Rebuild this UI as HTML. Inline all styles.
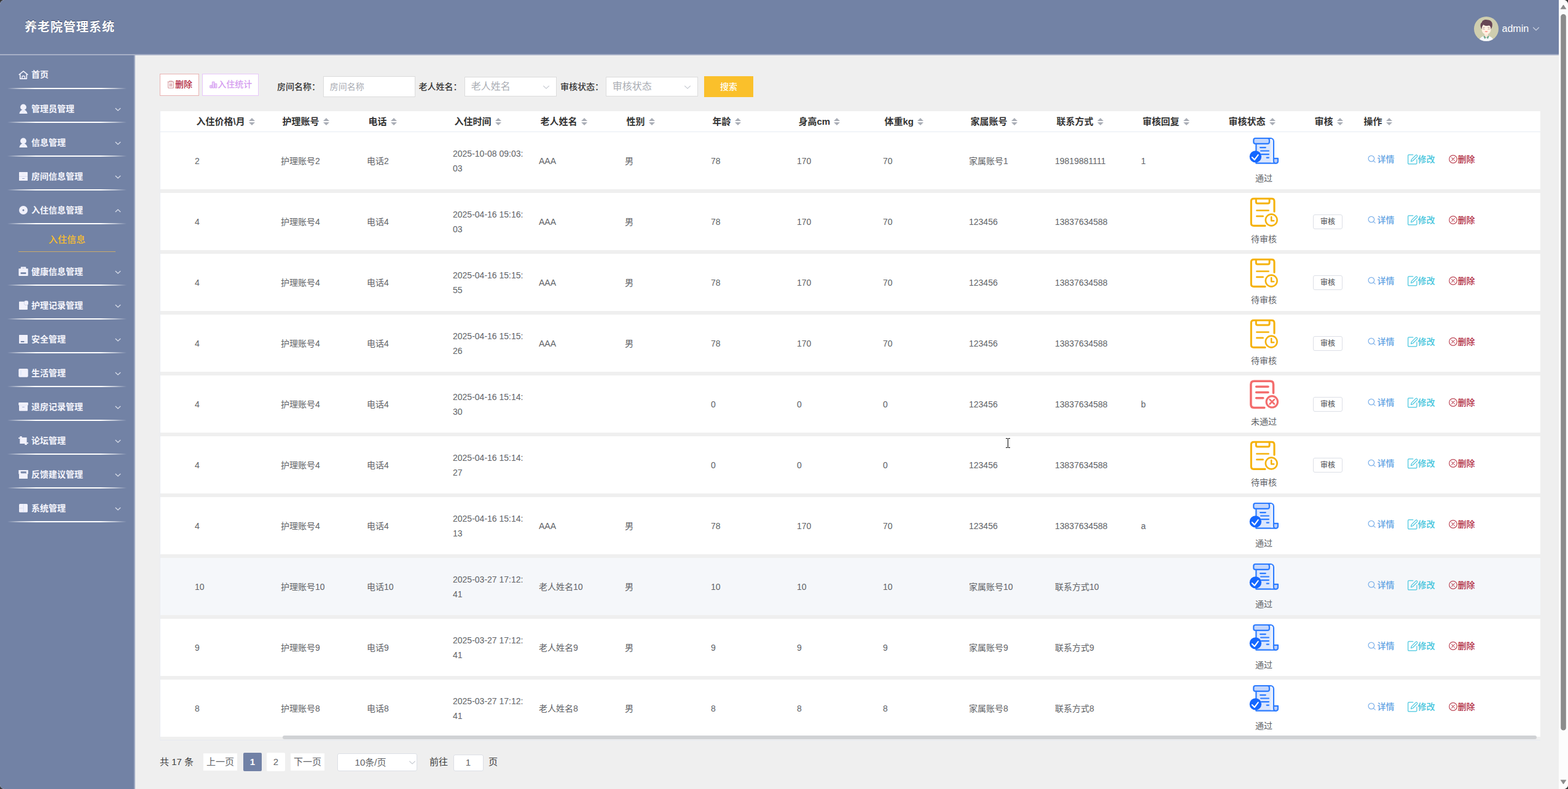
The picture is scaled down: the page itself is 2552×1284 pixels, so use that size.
<!DOCTYPE html><html lang="zh-CN"><head><meta charset="utf-8"><title>养老院管理系统</title><style>
*{box-sizing:border-box;margin:0;padding:0}
html,body{width:2552px;height:1284px;overflow:hidden;background:#353535}
body{font-family:"Liberation Sans","Noto Sans CJK SC",sans-serif;font-size:14px;color:#606266}
#app{position:absolute;left:0;top:0;width:2552px;height:1284px;border-radius:7px;overflow:hidden;background:#efefef}
.abs{position:absolute}
.hdr{position:absolute;left:0;top:0;width:2537px;height:90px;background:#7282a5;border-bottom:2px solid #a6afc6}
.title{position:absolute;left:40px;top:0;height:88px;line-height:88px;font-size:20px;letter-spacing:1px;font-weight:bold;color:#fff;white-space:nowrap;text-shadow:0 -1px 0 rgba(40,50,80,.75)}
.side{position:absolute;left:0;top:90px;width:220px;height:1194px;background:#7282a5;border-right:2px solid #a0aac3}
.mi{position:absolute;left:0;width:218px;height:30px;line-height:30px;color:#f6f6fd;font-weight:bold;font-size:14px;white-space:nowrap}
.mi .t{position:absolute;left:51px;top:0}
.mi svg.ic{position:absolute;left:30px;top:7px;width:16px;height:16px}
.mi svg.ar{position:absolute;left:186px;top:11px;width:12px;height:10px}
.sep{position:absolute;left:12px;width:194px;height:2px;background:linear-gradient(90deg,rgba(255,255,255,0) 0%,rgba(255,255,255,.55) 10%,#fff 24%,#fff 78%,rgba(255,255,255,.55) 90%,rgba(255,255,255,0) 100%)}
.sub{position:absolute;left:0;width:218px;text-align:center;font-size:15px;font-weight:500;color:#fbbf2d;height:30px;line-height:30px}
.btn{position:absolute;background:#fff;white-space:nowrap;font-size:14px;font-weight:500}
.lbl{position:absolute;font-size:14px;color:#333;font-weight:500;white-space:nowrap;height:34px;line-height:34px;top:123.5px}
.inp{position:absolute;background:#fff;border:1px solid #dcdcdc;white-space:nowrap;color:#a9acb3}
.th{position:absolute;top:181px;height:34px;line-height:34px;font-size:15px;font-weight:bold;color:#333;white-space:nowrap}
.cw{display:inline-block;position:relative;width:24px;height:34px;vertical-align:top}
.cw i{position:absolute;left:6px;width:0;height:0;border:5px solid transparent}
.cw i.a{top:6px;border-bottom-color:#a9adb6}
.cw i.d{top:18px;border-top-color:#a9adb6}
.row{position:absolute;left:261px;width:2246px;height:93px;background:#fff}
.c{position:absolute;white-space:nowrap;line-height:24px;font-size:14px;color:#606266}
.st{position:absolute;left:1997px;width:120px;text-align:center;font-size:14px;line-height:20px;height:20px;color:#606266}
.sh{position:absolute;left:2137px;width:48px;height:24px;border:1px solid #dcdfe6;border-radius:3px;background:#fff;font-size:12px;font-weight:500;line-height:22px;text-align:center;color:#606266}
.lk{position:absolute;font-size:14px;font-weight:500;line-height:20px;height:20px;white-space:nowrap}
.lk svg{position:absolute;top:3px;width:14px;height:14px}
.pg{position:absolute;font-size:15px;white-space:nowrap;color:#606266;text-align:center}
</style></head><body><div id="app">
<div class="hdr"><div class="title">养老院管理系统</div>
<svg class="abs" style="left:2399px;top:27px" width="40" height="40" viewBox="0 0 40 40">
<defs><clipPath id="av"><circle cx="20" cy="20" r="20"/></clipPath></defs>
<g clip-path="url(#av)"><rect width="40" height="40" fill="#cfceaf"/>
<path d="M8.5 40 C9 34.5 13 32.3 17 31.6 L23 31.6 C27 32.3 31 34.5 31.5 40 Z" fill="#f6f8fd"/>
<path d="M17 27 L23 27 L23 32 L20 35.2 L17 32 Z" fill="#fde6d8"/>
<path d="M15.4 32.3 L17.2 31 L19.6 34.6 L17.3 36.2 Z" fill="#6fa98c"/>
<path d="M24.6 32.3 L22.8 31 L20.4 34.6 L22.7 36.2 Z" fill="#6fa98c"/>
<path d="M12.4 16 C12.4 11 27.6 11 27.6 16 L27.3 22 C27 26 23.5 29 20 29 C16.5 29 13 26 12.7 22 Z" fill="#fff0e2"/>
<path d="M12.6 20.5 C10 17 9.5 11 13 9.2 C13 6.5 17 4.6 21 5.2 C26 5 30.5 8.5 29.8 13.5 C29.9 16.5 28.6 19 27.4 20.5 C27.6 17.5 26.3 15.2 24.8 14.6 C21.5 15.6 17.5 15 15.2 13.2 C14 14.6 12.6 16.5 12.6 20.5 Z" fill="#674555"/>
<path d="M14.3 18 L17.6 17.6 M22.4 17.6 L25.7 18" stroke="#8a6a70" stroke-width=".7" fill="none"/>
<path d="M14.3 20.6 Q15.9 19.6 17.5 20.6 M22.5 20.6 Q24.1 19.6 25.7 20.6" stroke="#9a7a7c" stroke-width=".7" fill="none"/>
<path d="M17.9 24.3 Q20 25.6 22.1 24.3 Q20 24.0 17.9 24.3 Z" fill="#ff5f5f" stroke="#ff6f66" stroke-width=".5"/>
</g></svg>
<div class="abs" style="left:2444.5px;top:36.5px;font-size:16px;line-height:20px;color:#fff;white-space:nowrap">admin</div>
<svg class="abs" style="left:2494px;top:43px" width="12" height="8" viewBox="0 0 12 8"><path d="M1.2 1.5 L6 6.2 L10.8 1.5" fill="none" stroke="#ccd2e1" stroke-width="1.2"/></svg>
</div>
<div class="side">
<div class="mi" style="top:17px"><svg class="ic" viewBox="0 0 16 16"><path d="M1.3 7.4 L8.1 1.8 L14.9 7.4" fill="none" stroke="#f1f1fb" stroke-width="1.7" stroke-linejoin="round" stroke-linecap="round"/><path d="M2.8 7 V14.1 H13.3 V7" fill="none" stroke="#f1f1fb" stroke-width="1.7" stroke-linejoin="round"/><path d="M5.9 14 V11.7 A2.25 2.25 0 0 1 10.4 11.7 V14" fill="none" stroke="#f1f1fb" stroke-width="1.4"/></svg><span class="t" style="top:-1px">首页</span></div>
<div class="sep" style="top:53px"></div>
<div class="mi" style="top:72px"><svg class="ic" viewBox="0 0 16 16"><circle cx="8" cy="5.4" r="4.9" fill="#f1f1fb"/><path d="M1.4 16 C2 12.4 3.6 10.8 6 9.7 L10 9.7 C12.4 10.8 14 12.4 14.6 16 Z" fill="#f1f1fb"/><rect x="7.7" y="11" width=".7" height="3.4" fill="#d6e2fa"/></svg><span class="t">管理员管理</span><svg class="ar" viewBox="0 0 12 10"><path d="M1.8 3 L6 7 L10.2 3" fill="none" stroke="#dfe3ee" stroke-width="1.1"/></svg></div>
<div class="sep" style="top:108px"></div>
<div class="mi" style="top:127px"><svg class="ic" viewBox="0 0 16 16"><circle cx="8" cy="5.4" r="4.9" fill="#f1f1fb"/><path d="M1.4 16 C2 12.4 3.6 10.8 6 9.7 L10 9.7 C12.4 10.8 14 12.4 14.6 16 Z" fill="#f1f1fb"/><rect x="7.7" y="11" width=".7" height="3.4" fill="#d6e2fa"/></svg><span class="t">信息管理</span><svg class="ar" viewBox="0 0 12 10"><path d="M1.8 3 L6 7 L10.2 3" fill="none" stroke="#dfe3ee" stroke-width="1.1"/></svg></div>
<div class="sep" style="top:163px"></div>
<div class="mi" style="top:182px"><svg class="ic" viewBox="0 0 16 16"><rect x="1" y="1" width="14" height="14" rx=".6" fill="#f1f1fb"/><rect x="1" y="7.4" width="14" height="1.4" fill="#dfe1f0"/><rect x="6.3" y="3.8" width="3.4" height=".8" fill="#e3e4f3"/><rect x="6.2" y="11.1" width="3.8" height=".9" fill="#8f9cc6"/></svg><span class="t">房间信息管理</span><svg class="ar" viewBox="0 0 12 10"><path d="M1.8 3 L6 7 L10.2 3" fill="none" stroke="#dfe3ee" stroke-width="1.1"/></svg></div>
<div class="sep" style="top:218px"></div>
<div class="mi" style="top:237px"><svg class="ic" viewBox="0 0 16 16"><circle cx="8" cy="8" r="7" fill="#f1f1fb"/><circle cx="8" cy="8" r="1.5" fill="#7282a5"/></svg><span class="t">入住信息管理</span><svg class="ar" viewBox="0 0 12 10"><path d="M1.8 7 L6 3 L10.2 7" fill="none" stroke="#dfe3ee" stroke-width="1.1"/></svg></div>
<div class="sep" style="top:273px"></div>
<div class="mi" style="top:337px"><svg class="ic" viewBox="0 0 16 16"><rect x="3.8" y="0.2" width="8.6" height="4" rx=".8" fill="#f1f1fb"/><rect x="6.5" y="2.3" width="3" height=".6" fill="#a9b3d0"/><rect x="0.4" y="2.9" width="15.3" height="12" rx=".9" fill="#f1f1fb"/><rect x="3.6" y="9.2" width="8.8" height="2.7" fill="#7282a5"/></svg><span class="t">健康信息管理</span><svg class="ar" viewBox="0 0 12 10"><path d="M1.8 3 L6 7 L10.2 3" fill="none" stroke="#dfe3ee" stroke-width="1.1"/></svg></div>
<div class="sep" style="top:373px"></div>
<div class="mi" style="top:392px"><svg class="ic" viewBox="0 0 16 16"><rect x="1" y="1.8" width="13.9" height="13.2" rx=".8" fill="#f1f1fb"/><circle cx="12.7" cy="4" r="3.9" fill="#c4cbe3"/><circle cx="12.7" cy="4" r="3.3" fill="#f1f1fb"/></svg><span class="t">护理记录管理</span><svg class="ar" viewBox="0 0 12 10"><path d="M1.8 3 L6 7 L10.2 3" fill="none" stroke="#dfe3ee" stroke-width="1.1"/></svg></div>
<div class="sep" style="top:428px"></div>
<div class="mi" style="top:447px"><svg class="ic" viewBox="0 0 16 16"><rect x="1" y="1" width="14" height="14" rx=".6" fill="#f1f1fb"/><rect x="3.8" y="11.1" width="5.7" height="1.8" rx=".3" fill="#7282a5"/><rect x="11.4" y="11.1" width="1.2" height="1.8" fill="#cfe0f8"/></svg><span class="t">安全管理</span><svg class="ar" viewBox="0 0 12 10"><path d="M1.8 3 L6 7 L10.2 3" fill="none" stroke="#dfe3ee" stroke-width="1.1"/></svg></div>
<div class="sep" style="top:483px"></div>
<div class="mi" style="top:502px"><svg class="ic" viewBox="0 0 16 16"><rect x="0.3" y="1" width="15.4" height="13.8" rx="1.8" fill="#f1f1fb"/><rect x="3.6" y="4" width=".9" height="7.6" fill="#d3e0f8"/></svg><span class="t">生活管理</span><svg class="ar" viewBox="0 0 12 10"><path d="M1.8 3 L6 7 L10.2 3" fill="none" stroke="#dfe3ee" stroke-width="1.1"/></svg></div>
<div class="sep" style="top:538px"></div>
<div class="mi" style="top:557px"><svg class="ic" viewBox="0 0 16 16"><rect x="0.2" y="1" width="15.7" height="4.8" rx="1" fill="#f1f1fb"/><rect x="1" y="5" width="14" height="9.8" rx="1" fill="#f1f1fb"/><rect x="1" y="5.6" width="14" height=".7" fill="#e2e3f2"/><rect x="6.2" y="8.1" width="3.7" height=".8" fill="#95a2ce"/></svg><span class="t">退房记录管理</span><svg class="ar" viewBox="0 0 12 10"><path d="M1.8 3 L6 7 L10.2 3" fill="none" stroke="#dfe3ee" stroke-width="1.1"/></svg></div>
<div class="sep" style="top:593px"></div>
<div class="mi" style="top:612px"><svg class="ic" viewBox="0 0 16 16"><rect x="2.3" y="2.9" width="11.3" height="10.1" fill="#f1f1fb"/><rect x="0.2" y="3" width="2.4" height="1.9" fill="#f1f1fb"/><rect x="2.3" y="1" width="3.4" height="2.2" fill="#f1f1fb"/><rect x="13.4" y="11" width="2.5" height="2" fill="#f1f1fb"/><rect x="10.4" y="12.8" width="3.4" height="2.2" fill="#f1f1fb"/></svg><span class="t">论坛管理</span><svg class="ar" viewBox="0 0 12 10"><path d="M1.8 3 L6 7 L10.2 3" fill="none" stroke="#dfe3ee" stroke-width="1.1"/></svg></div>
<div class="sep" style="top:648px"></div>
<div class="mi" style="top:667px"><svg class="ic" viewBox="0 0 16 16"><rect x="0.3" y="1" width="15.6" height="6.6" rx=".6" fill="#f1f1fb"/><rect x="1" y="7" width="14" height="8" rx=".6" fill="#f1f1fb"/><path d="M3.7 3.2 H12.7 V6.2 Q11.95 7.4 11.2 6.2 Q10.45 5 9.7 6.2 Q8.95 7.4 8.2 6.2 Q7.45 5 6.7 6.2 Q5.95 7.4 5.2 6.2 Q4.45 5 3.7 6.2 Z" fill="#7282a5"/></svg><span class="t">反馈建议管理</span><svg class="ar" viewBox="0 0 12 10"><path d="M1.8 3 L6 7 L10.2 3" fill="none" stroke="#dfe3ee" stroke-width="1.1"/></svg></div>
<div class="sep" style="top:703px"></div>
<div class="mi" style="top:722px"><svg class="ic" viewBox="0 0 16 16"><rect x="1" y="1" width="14" height="13.8" rx="1.6" fill="#f1f1fb"/><rect x="7.8" y="1" width=".9" height="13.8" fill="#cfdff8"/><rect x="1" y="7.3" width="6.8" height="1.3" fill="#e2e3f2"/></svg><span class="t">系统管理</span><svg class="ar" viewBox="0 0 12 10"><path d="M1.8 3 L6 7 L10.2 3" fill="none" stroke="#dfe3ee" stroke-width="1.1"/></svg></div>
<div class="sep" style="top:758px"></div>
<div class="sub" style="top:285px">入住信息</div>
<div class="abs" style="left:30px;top:319px;width:158px;height:1px;background:#c9ab6c"></div>
</div>
<div class="btn" style="left:260px;top:120px;width:64px;height:36px;border:1px solid #e9b3b3;color:#b0233c"><svg class="abs" style="left:10.6px;top:10.3px" width="12" height="13" viewBox="0 0 12 13"><path d="M0.6 2.2 H11.4 M3.6 2 V0.9 H8.4 V2 M1.7 2.4 V12.2 H10.3 V2.4 M4.3 4.6 V9.8 M6 4.6 V9.8 M7.7 4.6 V9.8" fill="none" stroke="#cf8a8f" stroke-width=".9"/></svg><span class="abs" style="left:24px;top:6px;line-height:20px">删除</span></div>
<div class="btn" style="left:329px;top:120px;width:92px;height:36px;border:1px solid #e8c7fb;color:#d59cf0"><svg class="abs" style="left:11px;top:10.5px" width="13" height="12" viewBox="0 0 13 12"><path d="M0.8 7 H4 V11 H0.8 Z M4.4 1.2 H8 V11 H4.4 Z M8.6 4.2 H11.8 V11 H8.6 Z" fill="#ecd6fa" stroke="#d59cf0" stroke-width="1"/></svg><span class="abs" style="left:24.3px;top:6px;line-height:20px">入住统计</span></div>
<div class="lbl" style="left:451px">房间名称：</div>
<div class="inp" style="left:526px;top:124px;width:150px;height:34px;font-size:14px;line-height:32px;padding-left:9.8px">房间名称</div>
<div class="lbl" style="left:681.5px">老人姓名：</div>
<div class="inp" style="left:756px;top:125px;width:150px;height:32px;font-size:16px;line-height:29px;padding-left:9.8px">老人姓名<svg class="abs" style="left:126px;top:11.5px" width="12" height="8" viewBox="0 0 12 8"><path d="M1.3 1.6 L6 6.1 L10.7 1.6" fill="none" stroke="#c0c4cc" stroke-width="1.1"/></svg></div>
<div class="lbl" style="left:912px">审核状态：</div>
<div class="inp" style="left:986px;top:125px;width:150px;height:32px;font-size:16px;line-height:29px;padding-left:9.8px">审核状态<svg class="abs" style="left:126px;top:11.5px" width="12" height="8" viewBox="0 0 12 8"><path d="M1.3 1.6 L6 6.1 L10.7 1.6" fill="none" stroke="#c0c4cc" stroke-width="1.1"/></svg></div>
<div class="abs" style="left:1146px;top:124px;width:80px;height:34px;background:#fac02b;color:#fff;font-weight:500;font-size:14px;line-height:34px;text-align:center">搜索</div>
<div class="abs" style="left:260px;top:181px;width:1px;height:1024px;background:#eaecf2"></div>
<div class="abs" style="left:260px;top:1204px;width:2247px;height:1px;background:#e6e9f1"></div>
<div class="abs" style="left:261px;top:181px;width:2246px;height:34px;background:#fff;border-bottom:1px solid #e6ebf3"></div>
<div class="th" style="left:319.5px">入住价格\月<span class="cw"><i class="a"></i><i class="d"></i></span></div>
<div class="th" style="left:459.5px">护理账号<span class="cw"><i class="a"></i><i class="d"></i></span></div>
<div class="th" style="left:599.5px">电话<span class="cw"><i class="a"></i><i class="d"></i></span></div>
<div class="th" style="left:739.5px">入住时间<span class="cw"><i class="a"></i><i class="d"></i></span></div>
<div class="th" style="left:879.5px">老人姓名<span class="cw"><i class="a"></i><i class="d"></i></span></div>
<div class="th" style="left:1019.5px">性别<span class="cw"><i class="a"></i><i class="d"></i></span></div>
<div class="th" style="left:1159.5px">年龄<span class="cw"><i class="a"></i><i class="d"></i></span></div>
<div class="th" style="left:1299.5px">身高cm<span class="cw"><i class="a"></i><i class="d"></i></span></div>
<div class="th" style="left:1439.5px">体重kg<span class="cw"><i class="a"></i><i class="d"></i></span></div>
<div class="th" style="left:1579.5px">家属账号<span class="cw"><i class="a"></i><i class="d"></i></span></div>
<div class="th" style="left:1719.5px">联系方式<span class="cw"><i class="a"></i><i class="d"></i></span></div>
<div class="th" style="left:1859.5px">审核回复<span class="cw"><i class="a"></i><i class="d"></i></span></div>
<div class="th" style="left:1999.5px">审核状态<span class="cw"><i class="a"></i><i class="d"></i></span></div>
<div class="th" style="left:2139.5px">审核<span class="cw"><i class="a"></i><i class="d"></i></span></div>
<div class="th" style="left:2219.5px">操作<span class="cw"><i class="a"></i><i class="d"></i></span></div>
<div class="row" style="top:215px;background:#fff">
<div class="c" style="left:56px;top:34.5px">2</div>
<div class="c" style="left:196px;top:34.5px">护理账号2</div>
<div class="c" style="left:336px;top:34.5px">电话2</div>
<div class="c" style="left:476px;top:22.5px">2025-10-08 09:03:<br>03</div>
<div class="c" style="left:616px;top:34.5px">AAA</div>
<div class="c" style="left:756px;top:34.5px">男</div>
<div class="c" style="left:896px;top:34.5px">78</div>
<div class="c" style="left:1036px;top:34.5px">170</div>
<div class="c" style="left:1176px;top:34.5px">70</div>
<div class="c" style="left:1316px;top:34.5px">家属账号1</div>
<div class="c" style="left:1456px;top:34.5px">19819881111</div>
<div class="c" style="left:1596px;top:34.5px">1</div>
<svg class="abs" style="left:1749px;top:0" width="100" height="95" viewBox="0 0 100 95">
<path d="M34.4 17 V50.7 H66 C68.4 50.7 69.9 49.2 69.9 46.8 V42.9 H62.9 V14.9 A4.9 4.9 0 0 0 58 10 H40 Z" fill="#dbe6fd" stroke="#2b7bff" stroke-width="2.2" stroke-linejoin="round"/>
<path d="M57 11.1 H58 A3.8 3.8 0 0 1 61.8 14.9 V49.6 H58.4 V16 Z" fill="#e9f0fe"/>
<path d="M62.9 42.9 H69.9 V46.8 C69.9 49.2 68.4 50.7 66.4 50.7 C64.2 50.7 62.9 49.2 62.9 46.8 Z" fill="#bccffa" stroke="#2b7bff" stroke-width="2" stroke-linejoin="round"/>
<rect x="30.3" y="10" width="25.6" height="8.9" rx="3" fill="#c3d6fc" stroke="#2b7bff" stroke-width="2.2"/>
<path d="M41 25.1 H49.8 M42 30.5 H55 M43 36.1 H55 M51.6 41.6 H55" stroke="#2b7bff" stroke-width="2.1" stroke-linecap="round" fill="none"/>
<circle cx="33.4" cy="39.9" r="9.7" fill="#1467ff"/>
<path d="M27.9 41.1 L31.8 45 L37.7 37.1" fill="none" stroke="#fff" stroke-width="2.1" stroke-linecap="round" stroke-linejoin="round"/>
</svg>
<div class="st" style="left:1736px;top:64.5px">通过</div>
<div class="lk" style="left:1965px;top:34px;color:#5fa2e3;padding-left:15.5px"><svg style="left:0;top:3.2px" viewBox="0 0 14 14"><circle cx="5.9" cy="6.1" r="4.8" fill="none" stroke="#7fb2ea" stroke-width="1.25"/><path d="M9.4 9.6 L12.2 12.1" stroke="#7fb2ea" stroke-width="1.2" stroke-linecap="round"/></svg>详情</div>
<div class="lk" style="left:2030px;top:34px;color:#3fc4dc;padding-left:16.5px"><svg style="left:0;top:2.2px;width:16.5px;height:16.5px" viewBox="0 0 15 15"><path d="M13.6 7.4 V13.2 C13.6 14 13.2 14.4 12.4 14.4 H1.8 C1 14.4 .6 14 .6 13.2 V2 C.6 1.2 1 .8 1.8 .8 H8.4" fill="none" stroke="#45c6de" stroke-width="1.1"/><path d="M5 10.6 L5.7 7.8 L12 1.5 C12.6 .9 13.5 .9 14 1.5 C14.6 2 14.6 2.9 14 3.5 L7.7 9.8 Z" fill="none" stroke="#45c6de" stroke-width="1.1" stroke-linejoin="round"/></svg>修改</div>
<div class="lk" style="left:2097px;top:34px;color:#b0283c;padding-left:14.5px"><svg style="left:0;top:2.9px" viewBox="0 0 14 14"><circle cx="7" cy="7" r="6.3" fill="none" stroke="#bd4a5a" stroke-width="1.2"/><path d="M4.7 4.7 L9.3 9.3 M9.3 4.7 L4.7 9.3" stroke="#bd4a5a" stroke-width="1.1" stroke-linecap="round"/></svg>删除</div>
</div>
<div class="row" style="top:314px;background:#fff">
<div class="c" style="left:56px;top:34.5px">4</div>
<div class="c" style="left:196px;top:34.5px">护理账号4</div>
<div class="c" style="left:336px;top:34.5px">电话4</div>
<div class="c" style="left:476px;top:22.5px">2025-04-16 15:16:<br>03</div>
<div class="c" style="left:616px;top:34.5px">AAA</div>
<div class="c" style="left:756px;top:34.5px">男</div>
<div class="c" style="left:896px;top:34.5px">78</div>
<div class="c" style="left:1036px;top:34.5px">170</div>
<div class="c" style="left:1176px;top:34.5px">70</div>
<div class="c" style="left:1316px;top:34.5px">123456</div>
<div class="c" style="left:1456px;top:34.5px">13837634588</div>
<svg class="abs" style="left:1749px;top:0" width="100" height="95" viewBox="0 0 100 95">
<g fill="none" stroke="#f5b20d" stroke-linecap="round" stroke-linejoin="round">
<path d="M64 30.2 V13.6 C64 10.8 62.4 9.2 59.6 9.2 H30.7 C27.9 9.2 26.3 10.8 26.3 13.6 V49 C26.3 51.8 27.9 53.4 30.7 53.4 H49" stroke-width="3.1"/>
<path d="M34.3 10 V14.6 C34.3 16.2 35.2 17 36.6 17 H53.8 C55.2 17 56.1 16.2 56.1 14.6 V10" stroke-width="3"/>
<path d="M35.4 28.5 H54.6 M35.4 37.9 H45.6" stroke-width="2.7"/>
<circle cx="59.2" cy="44" r="9.4" stroke-width="2.6"/>
<path d="M59.2 39 V45.2 H63.2" stroke-width="2.6"/>
</g></svg>
<div class="st" style="left:1736px;top:64.5px">待审核</div>
<div class="sh" style="left:1876px;top:35px">审核</div>
<div class="lk" style="left:1965px;top:34px;color:#5fa2e3;padding-left:15.5px"><svg style="left:0;top:3.2px" viewBox="0 0 14 14"><circle cx="5.9" cy="6.1" r="4.8" fill="none" stroke="#7fb2ea" stroke-width="1.25"/><path d="M9.4 9.6 L12.2 12.1" stroke="#7fb2ea" stroke-width="1.2" stroke-linecap="round"/></svg>详情</div>
<div class="lk" style="left:2030px;top:34px;color:#3fc4dc;padding-left:16.5px"><svg style="left:0;top:2.2px;width:16.5px;height:16.5px" viewBox="0 0 15 15"><path d="M13.6 7.4 V13.2 C13.6 14 13.2 14.4 12.4 14.4 H1.8 C1 14.4 .6 14 .6 13.2 V2 C.6 1.2 1 .8 1.8 .8 H8.4" fill="none" stroke="#45c6de" stroke-width="1.1"/><path d="M5 10.6 L5.7 7.8 L12 1.5 C12.6 .9 13.5 .9 14 1.5 C14.6 2 14.6 2.9 14 3.5 L7.7 9.8 Z" fill="none" stroke="#45c6de" stroke-width="1.1" stroke-linejoin="round"/></svg>修改</div>
<div class="lk" style="left:2097px;top:34px;color:#b0283c;padding-left:14.5px"><svg style="left:0;top:2.9px" viewBox="0 0 14 14"><circle cx="7" cy="7" r="6.3" fill="none" stroke="#bd4a5a" stroke-width="1.2"/><path d="M4.7 4.7 L9.3 9.3 M9.3 4.7 L4.7 9.3" stroke="#bd4a5a" stroke-width="1.1" stroke-linecap="round"/></svg>删除</div>
</div>
<div class="row" style="top:413px;background:#fff">
<div class="c" style="left:56px;top:34.5px">4</div>
<div class="c" style="left:196px;top:34.5px">护理账号4</div>
<div class="c" style="left:336px;top:34.5px">电话4</div>
<div class="c" style="left:476px;top:22.5px">2025-04-16 15:15:<br>55</div>
<div class="c" style="left:616px;top:34.5px">AAA</div>
<div class="c" style="left:756px;top:34.5px">男</div>
<div class="c" style="left:896px;top:34.5px">78</div>
<div class="c" style="left:1036px;top:34.5px">170</div>
<div class="c" style="left:1176px;top:34.5px">70</div>
<div class="c" style="left:1316px;top:34.5px">123456</div>
<div class="c" style="left:1456px;top:34.5px">13837634588</div>
<svg class="abs" style="left:1749px;top:0" width="100" height="95" viewBox="0 0 100 95">
<g fill="none" stroke="#f5b20d" stroke-linecap="round" stroke-linejoin="round">
<path d="M64 30.2 V13.6 C64 10.8 62.4 9.2 59.6 9.2 H30.7 C27.9 9.2 26.3 10.8 26.3 13.6 V49 C26.3 51.8 27.9 53.4 30.7 53.4 H49" stroke-width="3.1"/>
<path d="M34.3 10 V14.6 C34.3 16.2 35.2 17 36.6 17 H53.8 C55.2 17 56.1 16.2 56.1 14.6 V10" stroke-width="3"/>
<path d="M35.4 28.5 H54.6 M35.4 37.9 H45.6" stroke-width="2.7"/>
<circle cx="59.2" cy="44" r="9.4" stroke-width="2.6"/>
<path d="M59.2 39 V45.2 H63.2" stroke-width="2.6"/>
</g></svg>
<div class="st" style="left:1736px;top:64.5px">待审核</div>
<div class="sh" style="left:1876px;top:35px">审核</div>
<div class="lk" style="left:1965px;top:34px;color:#5fa2e3;padding-left:15.5px"><svg style="left:0;top:3.2px" viewBox="0 0 14 14"><circle cx="5.9" cy="6.1" r="4.8" fill="none" stroke="#7fb2ea" stroke-width="1.25"/><path d="M9.4 9.6 L12.2 12.1" stroke="#7fb2ea" stroke-width="1.2" stroke-linecap="round"/></svg>详情</div>
<div class="lk" style="left:2030px;top:34px;color:#3fc4dc;padding-left:16.5px"><svg style="left:0;top:2.2px;width:16.5px;height:16.5px" viewBox="0 0 15 15"><path d="M13.6 7.4 V13.2 C13.6 14 13.2 14.4 12.4 14.4 H1.8 C1 14.4 .6 14 .6 13.2 V2 C.6 1.2 1 .8 1.8 .8 H8.4" fill="none" stroke="#45c6de" stroke-width="1.1"/><path d="M5 10.6 L5.7 7.8 L12 1.5 C12.6 .9 13.5 .9 14 1.5 C14.6 2 14.6 2.9 14 3.5 L7.7 9.8 Z" fill="none" stroke="#45c6de" stroke-width="1.1" stroke-linejoin="round"/></svg>修改</div>
<div class="lk" style="left:2097px;top:34px;color:#b0283c;padding-left:14.5px"><svg style="left:0;top:2.9px" viewBox="0 0 14 14"><circle cx="7" cy="7" r="6.3" fill="none" stroke="#bd4a5a" stroke-width="1.2"/><path d="M4.7 4.7 L9.3 9.3 M9.3 4.7 L4.7 9.3" stroke="#bd4a5a" stroke-width="1.1" stroke-linecap="round"/></svg>删除</div>
</div>
<div class="row" style="top:512px;background:#fff">
<div class="c" style="left:56px;top:34.5px">4</div>
<div class="c" style="left:196px;top:34.5px">护理账号4</div>
<div class="c" style="left:336px;top:34.5px">电话4</div>
<div class="c" style="left:476px;top:22.5px">2025-04-16 15:15:<br>26</div>
<div class="c" style="left:616px;top:34.5px">AAA</div>
<div class="c" style="left:756px;top:34.5px">男</div>
<div class="c" style="left:896px;top:34.5px">78</div>
<div class="c" style="left:1036px;top:34.5px">170</div>
<div class="c" style="left:1176px;top:34.5px">70</div>
<div class="c" style="left:1316px;top:34.5px">123456</div>
<div class="c" style="left:1456px;top:34.5px">13837634588</div>
<svg class="abs" style="left:1749px;top:0" width="100" height="95" viewBox="0 0 100 95">
<g fill="none" stroke="#f5b20d" stroke-linecap="round" stroke-linejoin="round">
<path d="M64 30.2 V13.6 C64 10.8 62.4 9.2 59.6 9.2 H30.7 C27.9 9.2 26.3 10.8 26.3 13.6 V49 C26.3 51.8 27.9 53.4 30.7 53.4 H49" stroke-width="3.1"/>
<path d="M34.3 10 V14.6 C34.3 16.2 35.2 17 36.6 17 H53.8 C55.2 17 56.1 16.2 56.1 14.6 V10" stroke-width="3"/>
<path d="M35.4 28.5 H54.6 M35.4 37.9 H45.6" stroke-width="2.7"/>
<circle cx="59.2" cy="44" r="9.4" stroke-width="2.6"/>
<path d="M59.2 39 V45.2 H63.2" stroke-width="2.6"/>
</g></svg>
<div class="st" style="left:1736px;top:64.5px">待审核</div>
<div class="sh" style="left:1876px;top:35px">审核</div>
<div class="lk" style="left:1965px;top:34px;color:#5fa2e3;padding-left:15.5px"><svg style="left:0;top:3.2px" viewBox="0 0 14 14"><circle cx="5.9" cy="6.1" r="4.8" fill="none" stroke="#7fb2ea" stroke-width="1.25"/><path d="M9.4 9.6 L12.2 12.1" stroke="#7fb2ea" stroke-width="1.2" stroke-linecap="round"/></svg>详情</div>
<div class="lk" style="left:2030px;top:34px;color:#3fc4dc;padding-left:16.5px"><svg style="left:0;top:2.2px;width:16.5px;height:16.5px" viewBox="0 0 15 15"><path d="M13.6 7.4 V13.2 C13.6 14 13.2 14.4 12.4 14.4 H1.8 C1 14.4 .6 14 .6 13.2 V2 C.6 1.2 1 .8 1.8 .8 H8.4" fill="none" stroke="#45c6de" stroke-width="1.1"/><path d="M5 10.6 L5.7 7.8 L12 1.5 C12.6 .9 13.5 .9 14 1.5 C14.6 2 14.6 2.9 14 3.5 L7.7 9.8 Z" fill="none" stroke="#45c6de" stroke-width="1.1" stroke-linejoin="round"/></svg>修改</div>
<div class="lk" style="left:2097px;top:34px;color:#b0283c;padding-left:14.5px"><svg style="left:0;top:2.9px" viewBox="0 0 14 14"><circle cx="7" cy="7" r="6.3" fill="none" stroke="#bd4a5a" stroke-width="1.2"/><path d="M4.7 4.7 L9.3 9.3 M9.3 4.7 L4.7 9.3" stroke="#bd4a5a" stroke-width="1.1" stroke-linecap="round"/></svg>删除</div>
</div>
<div class="row" style="top:611px;background:#fff">
<div class="c" style="left:56px;top:34.5px">4</div>
<div class="c" style="left:196px;top:34.5px">护理账号4</div>
<div class="c" style="left:336px;top:34.5px">电话4</div>
<div class="c" style="left:476px;top:22.5px">2025-04-16 15:14:<br>30</div>
<div class="c" style="left:896px;top:34.5px">0</div>
<div class="c" style="left:1036px;top:34.5px">0</div>
<div class="c" style="left:1176px;top:34.5px">0</div>
<div class="c" style="left:1316px;top:34.5px">123456</div>
<div class="c" style="left:1456px;top:34.5px">13837634588</div>
<div class="c" style="left:1596px;top:34.5px">b</div>
<svg class="abs" style="left:1749px;top:0" width="100" height="95" viewBox="0 0 100 95">
<g fill="none" stroke="#f36d6d" stroke-linecap="round" stroke-linejoin="round">
<path d="M62.5 28.6 V14.4 C62.5 11 60.7 9.2 57.3 9.2 H31.1 C27.7 9.2 25.9 11 25.9 14.4 V47.3 C25.9 50.7 27.7 52.5 31.1 52.5 H47.8" stroke-width="3.6"/>
<path d="M34.6 18.3 H54 M34.6 27.5 H54 M34.6 36.7 H45.8" stroke-width="3.5"/>
<circle cx="60.3" cy="42.8" r="9.2" stroke-width="3.1"/>
<path d="M56.6 39.1 L64 46.5 M64 39.1 L56.6 46.5" stroke-width="2.6"/>
</g></svg>
<div class="st" style="left:1736px;top:64.5px">未通过</div>
<div class="sh" style="left:1876px;top:35px">审核</div>
<div class="lk" style="left:1965px;top:34px;color:#5fa2e3;padding-left:15.5px"><svg style="left:0;top:3.2px" viewBox="0 0 14 14"><circle cx="5.9" cy="6.1" r="4.8" fill="none" stroke="#7fb2ea" stroke-width="1.25"/><path d="M9.4 9.6 L12.2 12.1" stroke="#7fb2ea" stroke-width="1.2" stroke-linecap="round"/></svg>详情</div>
<div class="lk" style="left:2030px;top:34px;color:#3fc4dc;padding-left:16.5px"><svg style="left:0;top:2.2px;width:16.5px;height:16.5px" viewBox="0 0 15 15"><path d="M13.6 7.4 V13.2 C13.6 14 13.2 14.4 12.4 14.4 H1.8 C1 14.4 .6 14 .6 13.2 V2 C.6 1.2 1 .8 1.8 .8 H8.4" fill="none" stroke="#45c6de" stroke-width="1.1"/><path d="M5 10.6 L5.7 7.8 L12 1.5 C12.6 .9 13.5 .9 14 1.5 C14.6 2 14.6 2.9 14 3.5 L7.7 9.8 Z" fill="none" stroke="#45c6de" stroke-width="1.1" stroke-linejoin="round"/></svg>修改</div>
<div class="lk" style="left:2097px;top:34px;color:#b0283c;padding-left:14.5px"><svg style="left:0;top:2.9px" viewBox="0 0 14 14"><circle cx="7" cy="7" r="6.3" fill="none" stroke="#bd4a5a" stroke-width="1.2"/><path d="M4.7 4.7 L9.3 9.3 M9.3 4.7 L4.7 9.3" stroke="#bd4a5a" stroke-width="1.1" stroke-linecap="round"/></svg>删除</div>
</div>
<div class="row" style="top:710px;background:#fff">
<div class="c" style="left:56px;top:34.5px">4</div>
<div class="c" style="left:196px;top:34.5px">护理账号4</div>
<div class="c" style="left:336px;top:34.5px">电话4</div>
<div class="c" style="left:476px;top:22.5px">2025-04-16 15:14:<br>27</div>
<div class="c" style="left:896px;top:34.5px">0</div>
<div class="c" style="left:1036px;top:34.5px">0</div>
<div class="c" style="left:1176px;top:34.5px">0</div>
<div class="c" style="left:1316px;top:34.5px">123456</div>
<div class="c" style="left:1456px;top:34.5px">13837634588</div>
<svg class="abs" style="left:1749px;top:0" width="100" height="95" viewBox="0 0 100 95">
<g fill="none" stroke="#f5b20d" stroke-linecap="round" stroke-linejoin="round">
<path d="M64 30.2 V13.6 C64 10.8 62.4 9.2 59.6 9.2 H30.7 C27.9 9.2 26.3 10.8 26.3 13.6 V49 C26.3 51.8 27.9 53.4 30.7 53.4 H49" stroke-width="3.1"/>
<path d="M34.3 10 V14.6 C34.3 16.2 35.2 17 36.6 17 H53.8 C55.2 17 56.1 16.2 56.1 14.6 V10" stroke-width="3"/>
<path d="M35.4 28.5 H54.6 M35.4 37.9 H45.6" stroke-width="2.7"/>
<circle cx="59.2" cy="44" r="9.4" stroke-width="2.6"/>
<path d="M59.2 39 V45.2 H63.2" stroke-width="2.6"/>
</g></svg>
<div class="st" style="left:1736px;top:64.5px">待审核</div>
<div class="sh" style="left:1876px;top:35px">审核</div>
<div class="lk" style="left:1965px;top:34px;color:#5fa2e3;padding-left:15.5px"><svg style="left:0;top:3.2px" viewBox="0 0 14 14"><circle cx="5.9" cy="6.1" r="4.8" fill="none" stroke="#7fb2ea" stroke-width="1.25"/><path d="M9.4 9.6 L12.2 12.1" stroke="#7fb2ea" stroke-width="1.2" stroke-linecap="round"/></svg>详情</div>
<div class="lk" style="left:2030px;top:34px;color:#3fc4dc;padding-left:16.5px"><svg style="left:0;top:2.2px;width:16.5px;height:16.5px" viewBox="0 0 15 15"><path d="M13.6 7.4 V13.2 C13.6 14 13.2 14.4 12.4 14.4 H1.8 C1 14.4 .6 14 .6 13.2 V2 C.6 1.2 1 .8 1.8 .8 H8.4" fill="none" stroke="#45c6de" stroke-width="1.1"/><path d="M5 10.6 L5.7 7.8 L12 1.5 C12.6 .9 13.5 .9 14 1.5 C14.6 2 14.6 2.9 14 3.5 L7.7 9.8 Z" fill="none" stroke="#45c6de" stroke-width="1.1" stroke-linejoin="round"/></svg>修改</div>
<div class="lk" style="left:2097px;top:34px;color:#b0283c;padding-left:14.5px"><svg style="left:0;top:2.9px" viewBox="0 0 14 14"><circle cx="7" cy="7" r="6.3" fill="none" stroke="#bd4a5a" stroke-width="1.2"/><path d="M4.7 4.7 L9.3 9.3 M9.3 4.7 L4.7 9.3" stroke="#bd4a5a" stroke-width="1.1" stroke-linecap="round"/></svg>删除</div>
</div>
<div class="row" style="top:809px;background:#fff">
<div class="c" style="left:56px;top:34.5px">4</div>
<div class="c" style="left:196px;top:34.5px">护理账号4</div>
<div class="c" style="left:336px;top:34.5px">电话4</div>
<div class="c" style="left:476px;top:22.5px">2025-04-16 15:14:<br>13</div>
<div class="c" style="left:616px;top:34.5px">AAA</div>
<div class="c" style="left:756px;top:34.5px">男</div>
<div class="c" style="left:896px;top:34.5px">78</div>
<div class="c" style="left:1036px;top:34.5px">170</div>
<div class="c" style="left:1176px;top:34.5px">70</div>
<div class="c" style="left:1316px;top:34.5px">123456</div>
<div class="c" style="left:1456px;top:34.5px">13837634588</div>
<div class="c" style="left:1596px;top:34.5px">a</div>
<svg class="abs" style="left:1749px;top:0" width="100" height="95" viewBox="0 0 100 95">
<path d="M34.4 17 V50.7 H66 C68.4 50.7 69.9 49.2 69.9 46.8 V42.9 H62.9 V14.9 A4.9 4.9 0 0 0 58 10 H40 Z" fill="#dbe6fd" stroke="#2b7bff" stroke-width="2.2" stroke-linejoin="round"/>
<path d="M57 11.1 H58 A3.8 3.8 0 0 1 61.8 14.9 V49.6 H58.4 V16 Z" fill="#e9f0fe"/>
<path d="M62.9 42.9 H69.9 V46.8 C69.9 49.2 68.4 50.7 66.4 50.7 C64.2 50.7 62.9 49.2 62.9 46.8 Z" fill="#bccffa" stroke="#2b7bff" stroke-width="2" stroke-linejoin="round"/>
<rect x="30.3" y="10" width="25.6" height="8.9" rx="3" fill="#c3d6fc" stroke="#2b7bff" stroke-width="2.2"/>
<path d="M41 25.1 H49.8 M42 30.5 H55 M43 36.1 H55 M51.6 41.6 H55" stroke="#2b7bff" stroke-width="2.1" stroke-linecap="round" fill="none"/>
<circle cx="33.4" cy="39.9" r="9.7" fill="#1467ff"/>
<path d="M27.9 41.1 L31.8 45 L37.7 37.1" fill="none" stroke="#fff" stroke-width="2.1" stroke-linecap="round" stroke-linejoin="round"/>
</svg>
<div class="st" style="left:1736px;top:64.5px">通过</div>
<div class="lk" style="left:1965px;top:34px;color:#5fa2e3;padding-left:15.5px"><svg style="left:0;top:3.2px" viewBox="0 0 14 14"><circle cx="5.9" cy="6.1" r="4.8" fill="none" stroke="#7fb2ea" stroke-width="1.25"/><path d="M9.4 9.6 L12.2 12.1" stroke="#7fb2ea" stroke-width="1.2" stroke-linecap="round"/></svg>详情</div>
<div class="lk" style="left:2030px;top:34px;color:#3fc4dc;padding-left:16.5px"><svg style="left:0;top:2.2px;width:16.5px;height:16.5px" viewBox="0 0 15 15"><path d="M13.6 7.4 V13.2 C13.6 14 13.2 14.4 12.4 14.4 H1.8 C1 14.4 .6 14 .6 13.2 V2 C.6 1.2 1 .8 1.8 .8 H8.4" fill="none" stroke="#45c6de" stroke-width="1.1"/><path d="M5 10.6 L5.7 7.8 L12 1.5 C12.6 .9 13.5 .9 14 1.5 C14.6 2 14.6 2.9 14 3.5 L7.7 9.8 Z" fill="none" stroke="#45c6de" stroke-width="1.1" stroke-linejoin="round"/></svg>修改</div>
<div class="lk" style="left:2097px;top:34px;color:#b0283c;padding-left:14.5px"><svg style="left:0;top:2.9px" viewBox="0 0 14 14"><circle cx="7" cy="7" r="6.3" fill="none" stroke="#bd4a5a" stroke-width="1.2"/><path d="M4.7 4.7 L9.3 9.3 M9.3 4.7 L4.7 9.3" stroke="#bd4a5a" stroke-width="1.1" stroke-linecap="round"/></svg>删除</div>
</div>
<div class="row" style="top:908px;background:#f5f7fa">
<div class="c" style="left:56px;top:34.5px">10</div>
<div class="c" style="left:196px;top:34.5px">护理账号10</div>
<div class="c" style="left:336px;top:34.5px">电话10</div>
<div class="c" style="left:476px;top:22.5px">2025-03-27 17:12:<br>41</div>
<div class="c" style="left:616px;top:34.5px">老人姓名10</div>
<div class="c" style="left:756px;top:34.5px">男</div>
<div class="c" style="left:896px;top:34.5px">10</div>
<div class="c" style="left:1036px;top:34.5px">10</div>
<div class="c" style="left:1176px;top:34.5px">10</div>
<div class="c" style="left:1316px;top:34.5px">家属账号10</div>
<div class="c" style="left:1456px;top:34.5px">联系方式10</div>
<svg class="abs" style="left:1749px;top:0" width="100" height="95" viewBox="0 0 100 95">
<path d="M34.4 17 V50.7 H66 C68.4 50.7 69.9 49.2 69.9 46.8 V42.9 H62.9 V14.9 A4.9 4.9 0 0 0 58 10 H40 Z" fill="#dbe6fd" stroke="#2b7bff" stroke-width="2.2" stroke-linejoin="round"/>
<path d="M57 11.1 H58 A3.8 3.8 0 0 1 61.8 14.9 V49.6 H58.4 V16 Z" fill="#e9f0fe"/>
<path d="M62.9 42.9 H69.9 V46.8 C69.9 49.2 68.4 50.7 66.4 50.7 C64.2 50.7 62.9 49.2 62.9 46.8 Z" fill="#bccffa" stroke="#2b7bff" stroke-width="2" stroke-linejoin="round"/>
<rect x="30.3" y="10" width="25.6" height="8.9" rx="3" fill="#c3d6fc" stroke="#2b7bff" stroke-width="2.2"/>
<path d="M41 25.1 H49.8 M42 30.5 H55 M43 36.1 H55 M51.6 41.6 H55" stroke="#2b7bff" stroke-width="2.1" stroke-linecap="round" fill="none"/>
<circle cx="33.4" cy="39.9" r="9.7" fill="#1467ff"/>
<path d="M27.9 41.1 L31.8 45 L37.7 37.1" fill="none" stroke="#fff" stroke-width="2.1" stroke-linecap="round" stroke-linejoin="round"/>
</svg>
<div class="st" style="left:1736px;top:64.5px">通过</div>
<div class="lk" style="left:1965px;top:34px;color:#5fa2e3;padding-left:15.5px"><svg style="left:0;top:3.2px" viewBox="0 0 14 14"><circle cx="5.9" cy="6.1" r="4.8" fill="none" stroke="#7fb2ea" stroke-width="1.25"/><path d="M9.4 9.6 L12.2 12.1" stroke="#7fb2ea" stroke-width="1.2" stroke-linecap="round"/></svg>详情</div>
<div class="lk" style="left:2030px;top:34px;color:#3fc4dc;padding-left:16.5px"><svg style="left:0;top:2.2px;width:16.5px;height:16.5px" viewBox="0 0 15 15"><path d="M13.6 7.4 V13.2 C13.6 14 13.2 14.4 12.4 14.4 H1.8 C1 14.4 .6 14 .6 13.2 V2 C.6 1.2 1 .8 1.8 .8 H8.4" fill="none" stroke="#45c6de" stroke-width="1.1"/><path d="M5 10.6 L5.7 7.8 L12 1.5 C12.6 .9 13.5 .9 14 1.5 C14.6 2 14.6 2.9 14 3.5 L7.7 9.8 Z" fill="none" stroke="#45c6de" stroke-width="1.1" stroke-linejoin="round"/></svg>修改</div>
<div class="lk" style="left:2097px;top:34px;color:#b0283c;padding-left:14.5px"><svg style="left:0;top:2.9px" viewBox="0 0 14 14"><circle cx="7" cy="7" r="6.3" fill="none" stroke="#bd4a5a" stroke-width="1.2"/><path d="M4.7 4.7 L9.3 9.3 M9.3 4.7 L4.7 9.3" stroke="#bd4a5a" stroke-width="1.1" stroke-linecap="round"/></svg>删除</div>
</div>
<div class="row" style="top:1007px;background:#fff">
<div class="c" style="left:56px;top:34.5px">9</div>
<div class="c" style="left:196px;top:34.5px">护理账号9</div>
<div class="c" style="left:336px;top:34.5px">电话9</div>
<div class="c" style="left:476px;top:22.5px">2025-03-27 17:12:<br>41</div>
<div class="c" style="left:616px;top:34.5px">老人姓名9</div>
<div class="c" style="left:756px;top:34.5px">男</div>
<div class="c" style="left:896px;top:34.5px">9</div>
<div class="c" style="left:1036px;top:34.5px">9</div>
<div class="c" style="left:1176px;top:34.5px">9</div>
<div class="c" style="left:1316px;top:34.5px">家属账号9</div>
<div class="c" style="left:1456px;top:34.5px">联系方式9</div>
<svg class="abs" style="left:1749px;top:0" width="100" height="95" viewBox="0 0 100 95">
<path d="M34.4 17 V50.7 H66 C68.4 50.7 69.9 49.2 69.9 46.8 V42.9 H62.9 V14.9 A4.9 4.9 0 0 0 58 10 H40 Z" fill="#dbe6fd" stroke="#2b7bff" stroke-width="2.2" stroke-linejoin="round"/>
<path d="M57 11.1 H58 A3.8 3.8 0 0 1 61.8 14.9 V49.6 H58.4 V16 Z" fill="#e9f0fe"/>
<path d="M62.9 42.9 H69.9 V46.8 C69.9 49.2 68.4 50.7 66.4 50.7 C64.2 50.7 62.9 49.2 62.9 46.8 Z" fill="#bccffa" stroke="#2b7bff" stroke-width="2" stroke-linejoin="round"/>
<rect x="30.3" y="10" width="25.6" height="8.9" rx="3" fill="#c3d6fc" stroke="#2b7bff" stroke-width="2.2"/>
<path d="M41 25.1 H49.8 M42 30.5 H55 M43 36.1 H55 M51.6 41.6 H55" stroke="#2b7bff" stroke-width="2.1" stroke-linecap="round" fill="none"/>
<circle cx="33.4" cy="39.9" r="9.7" fill="#1467ff"/>
<path d="M27.9 41.1 L31.8 45 L37.7 37.1" fill="none" stroke="#fff" stroke-width="2.1" stroke-linecap="round" stroke-linejoin="round"/>
</svg>
<div class="st" style="left:1736px;top:64.5px">通过</div>
<div class="lk" style="left:1965px;top:34px;color:#5fa2e3;padding-left:15.5px"><svg style="left:0;top:3.2px" viewBox="0 0 14 14"><circle cx="5.9" cy="6.1" r="4.8" fill="none" stroke="#7fb2ea" stroke-width="1.25"/><path d="M9.4 9.6 L12.2 12.1" stroke="#7fb2ea" stroke-width="1.2" stroke-linecap="round"/></svg>详情</div>
<div class="lk" style="left:2030px;top:34px;color:#3fc4dc;padding-left:16.5px"><svg style="left:0;top:2.2px;width:16.5px;height:16.5px" viewBox="0 0 15 15"><path d="M13.6 7.4 V13.2 C13.6 14 13.2 14.4 12.4 14.4 H1.8 C1 14.4 .6 14 .6 13.2 V2 C.6 1.2 1 .8 1.8 .8 H8.4" fill="none" stroke="#45c6de" stroke-width="1.1"/><path d="M5 10.6 L5.7 7.8 L12 1.5 C12.6 .9 13.5 .9 14 1.5 C14.6 2 14.6 2.9 14 3.5 L7.7 9.8 Z" fill="none" stroke="#45c6de" stroke-width="1.1" stroke-linejoin="round"/></svg>修改</div>
<div class="lk" style="left:2097px;top:34px;color:#b0283c;padding-left:14.5px"><svg style="left:0;top:2.9px" viewBox="0 0 14 14"><circle cx="7" cy="7" r="6.3" fill="none" stroke="#bd4a5a" stroke-width="1.2"/><path d="M4.7 4.7 L9.3 9.3 M9.3 4.7 L4.7 9.3" stroke="#bd4a5a" stroke-width="1.1" stroke-linecap="round"/></svg>删除</div>
</div>
<div class="row" style="top:1106px;background:#fff">
<div class="c" style="left:56px;top:34.5px">8</div>
<div class="c" style="left:196px;top:34.5px">护理账号8</div>
<div class="c" style="left:336px;top:34.5px">电话8</div>
<div class="c" style="left:476px;top:22.5px">2025-03-27 17:12:<br>41</div>
<div class="c" style="left:616px;top:34.5px">老人姓名8</div>
<div class="c" style="left:756px;top:34.5px">男</div>
<div class="c" style="left:896px;top:34.5px">8</div>
<div class="c" style="left:1036px;top:34.5px">8</div>
<div class="c" style="left:1176px;top:34.5px">8</div>
<div class="c" style="left:1316px;top:34.5px">家属账号8</div>
<div class="c" style="left:1456px;top:34.5px">联系方式8</div>
<svg class="abs" style="left:1749px;top:0" width="100" height="95" viewBox="0 0 100 95">
<path d="M34.4 17 V50.7 H66 C68.4 50.7 69.9 49.2 69.9 46.8 V42.9 H62.9 V14.9 A4.9 4.9 0 0 0 58 10 H40 Z" fill="#dbe6fd" stroke="#2b7bff" stroke-width="2.2" stroke-linejoin="round"/>
<path d="M57 11.1 H58 A3.8 3.8 0 0 1 61.8 14.9 V49.6 H58.4 V16 Z" fill="#e9f0fe"/>
<path d="M62.9 42.9 H69.9 V46.8 C69.9 49.2 68.4 50.7 66.4 50.7 C64.2 50.7 62.9 49.2 62.9 46.8 Z" fill="#bccffa" stroke="#2b7bff" stroke-width="2" stroke-linejoin="round"/>
<rect x="30.3" y="10" width="25.6" height="8.9" rx="3" fill="#c3d6fc" stroke="#2b7bff" stroke-width="2.2"/>
<path d="M41 25.1 H49.8 M42 30.5 H55 M43 36.1 H55 M51.6 41.6 H55" stroke="#2b7bff" stroke-width="2.1" stroke-linecap="round" fill="none"/>
<circle cx="33.4" cy="39.9" r="9.7" fill="#1467ff"/>
<path d="M27.9 41.1 L31.8 45 L37.7 37.1" fill="none" stroke="#fff" stroke-width="2.1" stroke-linecap="round" stroke-linejoin="round"/>
</svg>
<div class="st" style="left:1736px;top:64.5px">通过</div>
<div class="lk" style="left:1965px;top:34px;color:#5fa2e3;padding-left:15.5px"><svg style="left:0;top:3.2px" viewBox="0 0 14 14"><circle cx="5.9" cy="6.1" r="4.8" fill="none" stroke="#7fb2ea" stroke-width="1.25"/><path d="M9.4 9.6 L12.2 12.1" stroke="#7fb2ea" stroke-width="1.2" stroke-linecap="round"/></svg>详情</div>
<div class="lk" style="left:2030px;top:34px;color:#3fc4dc;padding-left:16.5px"><svg style="left:0;top:2.2px;width:16.5px;height:16.5px" viewBox="0 0 15 15"><path d="M13.6 7.4 V13.2 C13.6 14 13.2 14.4 12.4 14.4 H1.8 C1 14.4 .6 14 .6 13.2 V2 C.6 1.2 1 .8 1.8 .8 H8.4" fill="none" stroke="#45c6de" stroke-width="1.1"/><path d="M5 10.6 L5.7 7.8 L12 1.5 C12.6 .9 13.5 .9 14 1.5 C14.6 2 14.6 2.9 14 3.5 L7.7 9.8 Z" fill="none" stroke="#45c6de" stroke-width="1.1" stroke-linejoin="round"/></svg>修改</div>
<div class="lk" style="left:2097px;top:34px;color:#b0283c;padding-left:14.5px"><svg style="left:0;top:2.9px" viewBox="0 0 14 14"><circle cx="7" cy="7" r="6.3" fill="none" stroke="#bd4a5a" stroke-width="1.2"/><path d="M4.7 4.7 L9.3 9.3 M9.3 4.7 L4.7 9.3" stroke="#bd4a5a" stroke-width="1.1" stroke-linecap="round"/></svg>删除</div>
</div>
<div class="abs" style="left:460px;top:1197px;width:2041px;height:6px;border-radius:3px;background:#d0d2d5"></div>
<div class="pg" style="left:260px;top:1225px;height:30px;line-height:30px;color:#3c3c3c">共 17 条</div>
<div class="pg" style="left:331px;top:1226px;width:55px;height:28px;line-height:28px;background:#fff">上一页</div>
<div class="pg" style="left:396px;top:1225px;width:30px;height:30px;line-height:30px;background:#7181a6;color:#fff;font-weight:bold;border-radius:2px">1</div>
<div class="pg" style="left:434px;top:1225px;width:30px;height:30px;line-height:30px;background:#fff;border-radius:2px">2</div>
<div class="pg" style="left:473px;top:1226px;width:55px;height:28px;line-height:28px;background:#fff">下一页</div>
<div class="pg" style="left:549px;top:1225.5px;width:130px;height:29px;line-height:27px;background:#fff;border:1px solid #dcdfe6;border-radius:3px;padding:0 30px 0 8px">10条/页<svg class="abs" style="left:115px;top:10.5px" width="12" height="8" viewBox="0 0 12 8"><path d="M1.3 1.6 L6 6.1 L10.7 1.6" fill="none" stroke="#c0c4cc" stroke-width="1.1"/></svg></div>
<div class="pg" style="left:699px;top:1225px;height:30px;line-height:30px;color:#3c3c3c">前往</div>
<div class="pg" style="left:737.5px;top:1227.5px;width:49px;height:27px;line-height:23px;background:#fff;border:1px solid #dcdfe6;border-radius:3px">1</div>
<div class="pg" style="left:795px;top:1225px;height:30px;line-height:30px;color:#3c3c3c">页</div>
<svg class="abs" style="left:1636px;top:712px" width="9" height="18" viewBox="0 0 9 18" shape-rendering="crispEdges"><path d="M1 1.5 H4 M5 1.5 H8 M4.5 2 V16 M1 16.5 H4 M5 16.5 H8" stroke="#000" stroke-width="1" fill="none"/></svg>
<div class="abs" style="left:2537px;top:0;width:15px;height:1284px;background:#fcfcfc"></div>
<svg class="abs" style="left:2537px;top:0" width="15" height="1284" viewBox="0 0 15 1284"><path d="M3.2 14.6 L7.5 8 L11.8 14.6 Z" fill="#8b8b8b" stroke="#8b8b8b" stroke-width=".8" stroke-linejoin="round"/><rect x="3.2" y="23" width="8.6" height="1165.5" rx="4.3" fill="#8b8b8b"/><path d="M3.2 1269.4 L7.5 1276 L11.8 1269.4 Z" fill="#8b8b8b" stroke="#8b8b8b" stroke-width=".8" stroke-linejoin="round"/></svg>
</div></body></html>
